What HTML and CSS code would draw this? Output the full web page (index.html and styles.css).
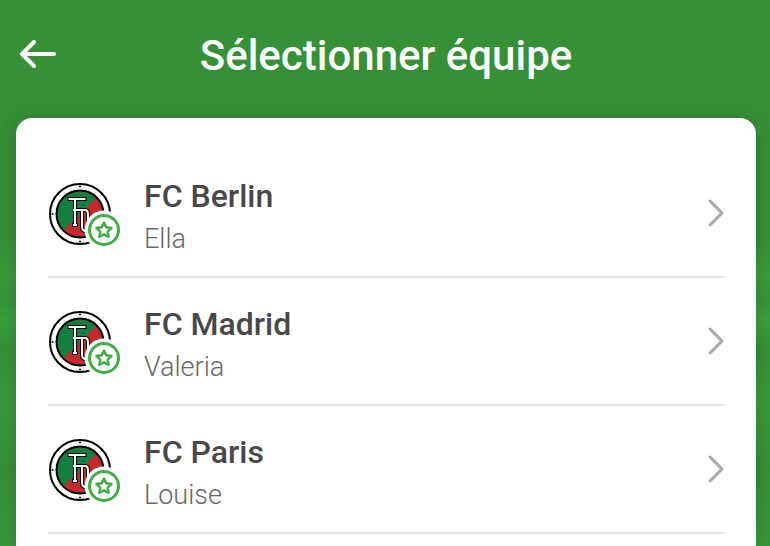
FILE: index.html
```
<!DOCTYPE html>
<html lang="fr">
<head>
    <meta charset="UTF-8">
    <meta name="viewport" content="width=device-width, initial-scale=1">
    <title>Sélectionner équipe</title>
    <link rel="stylesheet" href="styles.css">
</head>
<body>
    <!-- shared icons -->
    <svg class="sprite" aria-hidden="true">
        <symbol id="crest" viewBox="0 0 76 66">
            <circle cx="32" cy="32" r="30" fill="#fff" stroke="#000" stroke-width="2"/>
            <circle cx="32" cy="32" r="23.5" fill="#157f3f"/>
            <path d="M48.6 15.4A23.5 23.5 0 0 1 15.4 48.6Z" fill="#c42a2a"/>
            <circle cx="32" cy="32" r="23.5" fill="none" stroke="#000" stroke-width="2"/>
            <g fill="#000">
                <circle cx="32" cy="4.5" r="1"/>
                <circle cx="4.5" cy="32" r="1"/>
                <circle cx="32" cy="59.5" r="1"/>
            </g>
            <g fill="none" stroke="#000" stroke-width="4">
                <path d="M19.5 17H38.5M27 17V43M24 43H30M25 28H37Q40 28 40 32V48M34 28V45Q34 49 38 49"/>
            </g>
            <g fill="none" stroke="#fff" stroke-width="2">
                <path d="M20.5 17H37.5M27 17V43M25 43H29M25 28H37Q40 28 40 32V48M34 28V45Q34 49 38 49"/>
            </g>
            <circle cx="56" cy="48" r="19.5" fill="#fff"/>
            <circle cx="56" cy="48" r="14.5" fill="#fff" stroke="#42ae40" stroke-width="3"/>
            <path d="M56 40.5l2.3 4.8 5.2.7-3.8 3.6.9 5.2-4.6-2.5-4.6 2.5.9-5.2-3.8-3.6 5.2-.7z" fill="none" stroke="#42ae40" stroke-width="2.5" stroke-linejoin="round"/>
        </symbol>
        <symbol id="chevron" viewBox="0 0 16 30">
            <path d="M2 3L14 15L2 27" fill="none" stroke="#a8a8a8" stroke-width="3" stroke-linecap="round" stroke-linejoin="round"/>
        </symbol>
    </svg>

    <header class="header">
        <button class="back" type="button" aria-label="Retour">
            <svg width="36" height="28" viewBox="0 0 36 28">
                <path d="M14 2L2 14L14 26M2 14H34" fill="none" stroke="#fff" stroke-width="4" stroke-linecap="round" stroke-linejoin="round"/>
            </svg>
        </button>
        <h1>Sélectionner équipe</h1>
    </header>

    <main class="card">
        <ul class="teams">
            <li>
                <a class="team" href="#berlin">
                    <svg class="crest"><use href="#crest"/></svg>
                    <span class="info">
                        <strong class="name">FC Berlin</strong>
                        <span class="player">Ella</span>
                    </span>
                    <svg class="chevron"><use href="#chevron"/></svg>
                </a>
            </li>
            <li>
                <a class="team" href="#madrid">
                    <svg class="crest"><use href="#crest"/></svg>
                    <span class="info">
                        <strong class="name">FC Madrid</strong>
                        <span class="player">Valeria</span>
                    </span>
                    <svg class="chevron"><use href="#chevron"/></svg>
                </a>
            </li>
            <li>
                <a class="team" href="#paris">
                    <svg class="crest"><use href="#crest"/></svg>
                    <span class="info">
                        <strong class="name">FC Paris</strong>
                        <span class="player">Louise</span>
                    </span>
                    <svg class="chevron"><use href="#chevron"/></svg>
                </a>
            </li>
        </ul>
    </main>
</body>
</html>
```
FILE: styles.css
```
* {
    box-sizing: border-box;
}
body {
    margin: 0;
    min-height: 100vh;
    display: flex;
    flex-direction: column;
    font-family: Roboto, "Open Sans", sans-serif;
    background: linear-gradient(#359036 0, #359036 240px, #389b38 275px, #36943a 300px, #37a03a 320px, #359036 350px, #379a39 400px, #359036 470px, #379739 100%);
}
.sprite {
    position: absolute;
    width: 0;
    height: 0;
}
.header {
    display: grid;
    grid-template-columns: 36px 1fr 36px;
    align-items: center;
    height: 118px;
    padding: 0 18px 10px 20px;
    color: white;
}
.header h1 {
    margin: 0;
    padding-top: 4px;
    font-size: 42px;
    line-height: 48px;
    font-weight: 500;
    text-align: center;
}
.back {
    display: flex;
    padding: 0;
    border: none;
    background: none;
    cursor: pointer;
}
.card {
    flex: 1;
    margin: 0 14px 0 16px;
    padding: 32px 32px 0;
    background: white;
    border-radius: 16px 16px 0 0;
    box-shadow: 0 0 16px rgba(60,60,60,0.3);
}
.teams {
    margin: 0;
    padding: 0;
    list-style: none;
}
.team {
    display: flex;
    align-items: center;
    height: 128px;
    border-bottom: 2px solid #e6e6e6;
    text-decoration: none;
}
.crest {
    width: 76px;
    height: 66px;
    margin-top: 4px;
    margin-right: 20px;
}
.info {
    flex: 1;
    padding-top: 8px;
}
.name {
    display: block;
    font-size: 32px;
    line-height: 44px;
    font-weight: 500;
    color: #484848;
}
.player {
    display: block;
    font-size: 27px;
    line-height: 42px;
    font-weight: 300;
    color: #686868;
}
.chevron {
    width: 16px;
    height: 30px;
}
```
